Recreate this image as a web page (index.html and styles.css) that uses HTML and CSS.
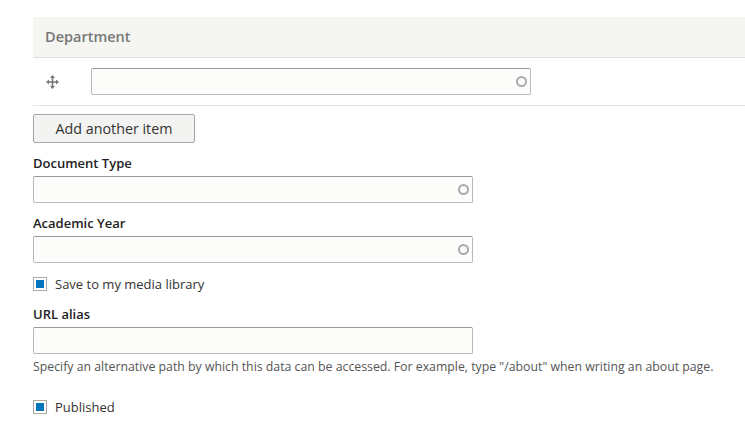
FILE: index.html
```html
<!DOCTYPE html>
<html>
<head>
<meta charset="utf-8">
<link rel="stylesheet" href="styles.css">
</head>
<body>
<div class="page">
  <div class="table">
    <div class="thead">Department</div>
    <div class="trow">
      <span class="handle">
        <svg width="13" height="14" viewBox="0 0 13 14"><path d="M6.5 0 L9 3 H7.3 V6.2 H10 V4.5 L13 7 L10 9.5 V7.8 H7.3 V11 H9 L6.5 14 L4 11 H5.7 V7.8 H3 V9.5 L0 7 L3 4.5 V6.2 H5.7 V3 H4 Z" fill="#777"/></svg>
      </span>
      <div class="input auto"><span class="throbber"></span></div>
    </div>
  </div>
  <button class="btn">Add another item</button>
  <div class="field first">
    <div class="label">Document Type</div>
    <div class="input auto"><span class="throbber"></span></div>
  </div>
  <div class="field">
    <div class="label">Academic Year</div>
    <div class="input auto"><span class="throbber"></span></div>
  </div>
  <div class="check"><span class="box"><span class="mark"></span></span>Save to my media library</div>
  <div class="field url">
    <div class="label">URL alias</div>
    <div class="input"></div>
    <div class="desc">Specify an alternative path by which this data can be accessed. For example, type "/about" when writing an about page.</div>
  </div>
  <div class="check published"><span class="box"><span class="mark"></span></span>Published</div>
</div>
</body>
</html>
```
FILE: styles.css
```css
html, body { margin: 0; padding: 0; background: #fff; }
body { font-family: "Open Sans", "Liberation Sans", sans-serif; color: #333; font-size: 13px; }
.page { padding: 17px 0 0 33px; }
.table { border-bottom: 1px solid #e6e4df; }
.thead { height: 40px; line-height: 40px; background: #f5f5f2; border-bottom: 1px solid #e0e0d8; padding-left: 12px; font-weight: 600; color: #777; font-size: 14.5px; }
.trow { height: 47px; display: flex; align-items: center; }
.handle { width: 58px; display: flex; padding-left: 13px; box-sizing: border-box; }
.handle svg { display: block; }
.input { box-sizing: border-box; width: 440px; height: 27px; border: 1px solid #b8b8b8; border-top-color: #999; background: #fcfcfa; border-radius: 2px; position: relative; }
.throbber { position: absolute; right: 3px; top: 7px; width: 11px; height: 11px; box-sizing: border-box; border: 2px solid #aaa; border-radius: 50%; }
.btn { display: block; margin-top: 8px; width: 162px; height: 29px; box-sizing: border-box; border: 1px solid #a6a6a6; background: #f3f3f1; border-radius: 2px; font-family: inherit; font-size: 14.3px; color: #333; padding: 0; }
.field { margin-top: 11px; }
.field.first { margin-top: 11px; }
.label { font-weight: 600; font-size: 13px; line-height: 18px; margin-bottom: 4px; color: #222; }
.check { display: flex; align-items: center; margin-top: 12px; font-size: 13px; line-height: 18px; color: #333; }
.box { width: 14px; height: 14px; box-sizing: border-box; border: 1px solid #ababab; display: flex; align-items: center; justify-content: center; margin-right: 8px; }
.mark { width: 8px; height: 8px; background: #0074bd; }
.url { margin-top: 12px; }
.desc { font-size: 12.3px; color: #555; margin-top: 4px; line-height: 18px; }
.published { margin-top: 22px; }
```
